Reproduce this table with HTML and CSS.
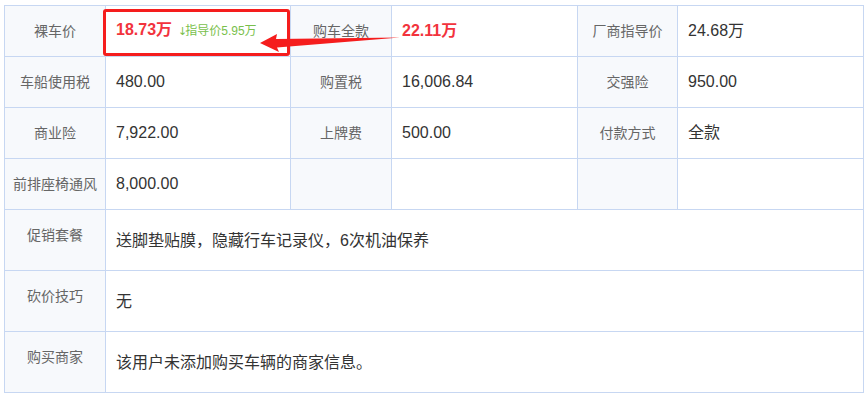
FILE: index.html
```html
<!DOCTYPE html>
<html lang="zh">
<head>
<meta charset="utf-8">
<title>购车价格</title>
<link rel="stylesheet" href="styles.css">
</head>
<body>
<div class="wrap">
  <table class="price-table">
    <colgroup>
      <col class="c-l1"><col class="c-v1"><col class="c-l2"><col class="c-v2"><col class="c-l3"><col class="c-v3">
    </colgroup>
    <tbody>
      <tr class="short">
        <th>裸车价</th>
        <td><span class="red">18.73万</span><span class="down"><span class="down-arrow">↓</span>指导价5.95万</span></td>
        <th>购车全款</th>
        <td><span class="red">22.11万</span></td>
        <th>厂商指导价</th>
        <td>24.68万</td>
      </tr>
      <tr class="short">
        <th>车船使用税</th>
        <td>480.00</td>
        <th>购置税</th>
        <td>16,006.84</td>
        <th>交强险</th>
        <td>950.00</td>
      </tr>
      <tr class="short">
        <th>商业险</th>
        <td>7,922.00</td>
        <th>上牌费</th>
        <td>500.00</td>
        <th>付款方式</th>
        <td>全款</td>
      </tr>
      <tr class="short">
        <th>前排座椅通风</th>
        <td>8,000.00</td>
        <th></th>
        <td></td>
        <th></th>
        <td></td>
      </tr>
      <tr class="tall">
        <th>促销套餐</th>
        <td colspan="5">送脚垫贴膜，隐藏行车记录仪，6次机油保养</td>
      </tr>
      <tr class="tall">
        <th>砍价技巧</th>
        <td colspan="5">无</td>
      </tr>
      <tr class="tall">
        <th>购买商家</th>
        <td colspan="5">该用户未添加购买车辆的商家信息。</td>
      </tr>
    </tbody>
  </table>
  <div class="mark-box"></div>
  <svg class="mark-arrow" width="867" height="80" viewBox="0 0 867 80">
    <polygon points="260,43 277,34 276,39 400,37.5 277,47.5 279,52" fill="#f51d1d"/>
  </svg>
</div>
</body>
</html>
```

FILE: styles.css
```css
html, body {
  margin: 0;
  padding: 0;
  background: #ffffff;
}
body {
  padding: 5px 0 0 4px;
  font-family: "Liberation Sans", "Noto Sans CJK SC", sans-serif;
}
.wrap {
  position: relative;
  width: 859px;
}
.price-table {
  border-collapse: collapse;
  table-layout: fixed;
  width: 859px;
}
.c-l1 { width: 101px; }
.c-v1 { width: 185px; }
.c-l2 { width: 101px; }
.c-v2 { width: 186px; }
.c-l3 { width: 100px; }
.c-v3 { width: 186px; }

.price-table th,
.price-table td {
  border: 1px solid #c7d7f2;
  padding: 0;
  line-height: 20px;
}
.price-table th {
  background: #f7f9fc;
  color: #666666;
  font-size: 14px;
  font-weight: normal;
  text-align: center;
}
.price-table td {
  color: #333333;
  font-size: 16px;
  padding-left: 10px;
  text-align: left;
}
.short th, .short td {
  height: 50px;
  vertical-align: middle;
}
.tall th {
  vertical-align: top;
  padding-top: 15px;
  height: 45px;
}
.tall td {
  vertical-align: middle;
  padding-top: 2px;
  height: 58px;
}
.red {
  color: #f2333d;
  font-weight: bold;
}
.down {
  color: #79bf4c;
  font-size: 12px;
  margin-left: 6px;
}
.down-arrow {
  font-family: "DejaVu Sans", sans-serif;
  font-size: 11px;
  letter-spacing: -2px;
}
.mark-box {
  position: absolute;
  left: 99px;
  top: 4px;
  width: 181px;
  height: 41px;
  border: 3px solid #f51d1d;
  border-radius: 3px;
}
.mark-arrow {
  position: absolute;
  left: -4px;
  top: -5px;
  pointer-events: none;
}
```
